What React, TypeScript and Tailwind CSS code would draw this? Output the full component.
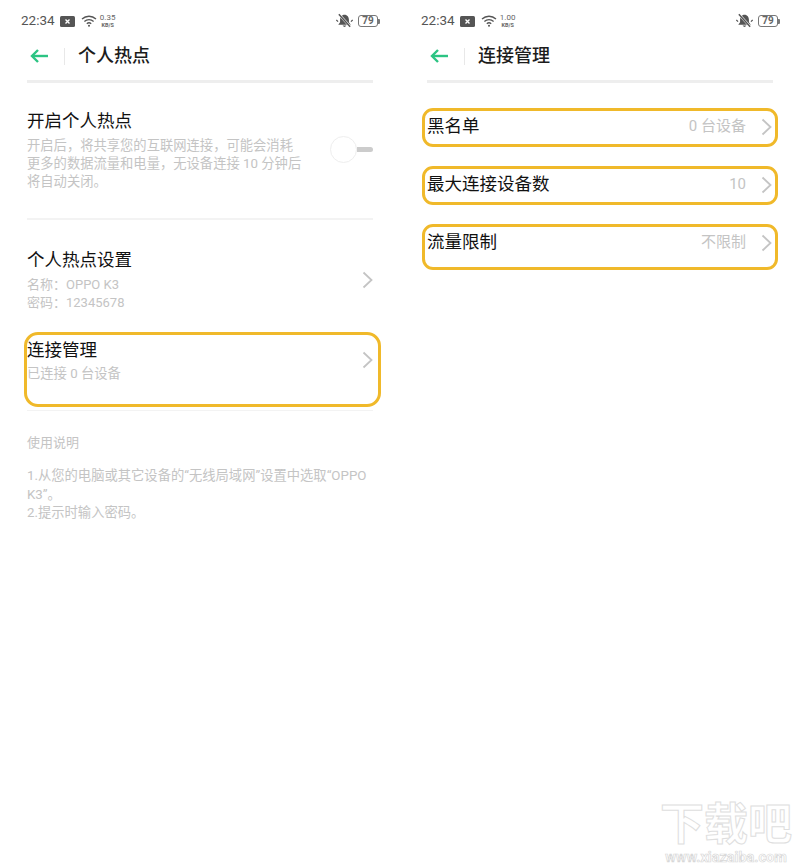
const font = "font-['Roboto','Noto_Sans_CJK_SC',sans-serif]"

function Chevron({ className = '' }: { className?: string }) {
  return (
    <svg width="11" height="18" viewBox="0 0 11 18" fill="none" className={className}>
      <path d="M1.5 1.5 L9.5 9 L1.5 16.5" stroke="#c4c4c4" strokeWidth="1.8" />
    </svg>
  )
}

function StatusBar({ speed }: { speed: string }) {
  return (
    <div className="flex h-[14px] items-center justify-between pl-[21px] pr-[22px]">
      <div className="flex items-center">
        <span className="text-[13.5px] leading-none text-[#555]">22:34</span>
        <svg width="15" height="11" viewBox="0 0 15 11" className="ml-[5px]">
          <rect width="15" height="11" rx="1.5" fill="#555" />
          <path d="M5.5 3.5 L9.5 7.5 M9.5 3.5 L5.5 7.5" stroke="#fff" strokeWidth="1.4" />
        </svg>
        <svg width="16" height="12" viewBox="0 0 16 12" fill="none" className="ml-[6px]" stroke="#555" strokeWidth="1.3">
          <path d="M1 4 C5 0.3 11 0.3 15 4" />
          <path d="M3.4 6.4 C6 4 10 4 12.6 6.4" />
          <path d="M5.8 8.7 C7 7.7 9 7.7 10.2 8.7" />
          <circle cx="8" cy="10.8" r="1" fill="#555" stroke="none" />
        </svg>
        <div className="ml-[3px] flex w-[16px] flex-col items-center text-[#666]">
          <span className="text-[8px] leading-[8px]">{speed}</span>
          <span className="text-[5.5px] font-bold leading-[6px]">KB/S</span>
        </div>
      </div>
      <div className="flex items-center">
        <svg width="17" height="16" viewBox="0 0 15 14" fill="none">
          <path d="M7.5 1.5 C5 1.5 3.6 3.6 3.6 6 L3.6 8 L2 10.4 L13 10.4 L11.4 8 L11.4 6 C11.4 3.6 10 1.5 7.5 1.5 Z" fill="#555" />
          <path d="M5.8 11 Q7.5 13.6 9.2 11" fill="#555" />
          <path d="M3 1.5 L13 12.5" stroke="#fff" strokeWidth="2.2" />
          <path d="M2.5 1 L12.5 12" stroke="#555" strokeWidth="1.3" />
          <path d="M0.3 6 L1.8 7.5 M14.7 6 L13.2 7.5" stroke="#555" strokeWidth="1.1" />
        </svg>
        <div className="relative ml-[5px] flex h-[12px] w-[20px] items-center justify-center rounded-[3px] border border-[#777] text-[10px] font-bold leading-none text-[#666]">
          79
          <span className="absolute -right-[3px] h-[5px] w-[2px] rounded-r-[1px] bg-[#777]" />
        </div>
      </div>
    </div>
  )
}

function Header({ title }: { title: string }) {
  return (
    <>
      <div className="mt-[9px] flex h-[38px] items-center pl-[30px]">
        <svg width="18" height="14" viewBox="0 0 18 14" fill="none" stroke="#2cc483" strokeWidth="2.4">
          <path d="M18 7 L2 7" />
          <path d="M8 1 L2 7 L8 13" />
        </svg>
        <span className="ml-[16px] h-[17px] w-px bg-[#e8e8e8]" />
        <span className="ml-[13px] text-[18px] font-medium leading-none text-[#1c1c1c]">{title}</span>
      </div>
      <div className="mx-[27px] mt-[5px] h-[3px] bg-[#eeeeee]" />
    </>
  )
}

function Left() {
  return (
    <div className="w-[400px] pt-[14px]">
      <StatusBar speed="0.35" />
      <Header title="个人热点" />
      <div className="mx-[27px]">
        <div className="mt-[25px] flex justify-between">
          <div>
            <div className="text-[17.5px] leading-[26px] text-[#111]">开启个人热点</div>
            <div className="mt-[3px] w-[276px] text-[13.3px] leading-[18px] text-[#c4c4c4]">
              开启后，将共享您的互联网连接，可能会消耗更多的数据流量和电量，无设备连接 10 分钟后将自动关闭。
            </div>
          </div>
          <div className="mt-[28px] flex h-[27px] items-center">
            <span className="h-[27px] w-[27px] rounded-full border border-[#eeeeee] bg-white" />
            <span className="h-[5px] w-[16px] rounded-r-full bg-[#cccccc]" />
          </div>
        </div>
        <div className="mt-[27px] h-[2px] bg-[#f3f3f3]" />
        <div className="mt-[27px] flex items-center justify-between">
          <div>
            <div className="text-[17.5px] leading-[26px] text-[#111]">个人热点设置</div>
            <div className="mt-[3px] text-[13px] leading-[18px] text-[#c4c4c4]">名称：OPPO K3</div>
            <div className="text-[13px] leading-[18px] text-[#c4c4c4]">密码：12345678</div>
          </div>
          <Chevron />
        </div>
      </div>
      <div className="ml-[24px] mt-[20px] flex h-[75px] w-[357px] justify-between rounded-[14px] border-[3px] border-[#f0b92a] pr-[5px]">
        <div className="pt-[2px]">
          <div className="text-[17.5px] leading-[26px] text-[#111]">连接管理</div>
          <div className="mt-[2px] text-[13.3px] leading-[18px] text-[#c4c4c4]">已连接 0 台设备</div>
        </div>
        <Chevron className="mt-[16px]" />
      </div>
      <div className="mx-[27px] mt-[3px] h-px bg-[#f3f3f3]" />
      <div className="mx-[27px] mt-[23px] text-[13px] leading-[18px] text-[#c4c4c4]">使用说明</div>
      <div className="mx-[27px] mt-[15px] text-[13.3px] leading-[18.5px] text-[#c4c4c4]">
        <div>1.从您的电脑或其它设备的“无线局域网”设置中选取“OPPO K3”。</div>
        <div>2.提示时输入密码。</div>
      </div>
    </div>
  )
}

function BoxRow({ label, value, tall }: { label: string; value: string; tall?: boolean }) {
  return (
    <div
      className={`flex justify-between rounded-[11px] border-[3px] border-[#f0b92a] pl-[2px] pr-[3px] ${tall ? 'h-[46px]' : 'h-[39px]'}`}
    >
      <span className="mt-[2px] text-[17.5px] leading-[26px] text-[#111]">{label}</span>
      <div className="flex h-[31px] items-center">
        <span className="text-[15px] text-[#c4c4c4]">{value}</span>
        <Chevron className="ml-[15px]" />
      </div>
    </div>
  )
}

function Right() {
  return (
    <div className="w-[400px] pt-[14px]">
      <StatusBar speed="1.00" />
      <Header title="连接管理" />
      <div className="mx-[22px] mt-[25px] flex flex-col gap-[19px]">
        <BoxRow label="黑名单" value="0 台设备" />
        <BoxRow label="最大连接设备数" value="10" />
        <BoxRow label="流量限制" value="不限制" tall />
      </div>
    </div>
  )
}

export default function App() {
  return (
    <div className={`relative flex h-[867px] w-[800px] overflow-hidden bg-white ${font}`}>
      <Left />
      <Right />
      {/* faint site watermark */}
      <div className="absolute bottom-[1px] right-[8px] flex w-[132px] flex-col items-center">
        <span className="text-[44px] font-bold leading-[50px] text-white [-webkit-text-stroke:1px_#dedede]">下载吧</span>
        <span className="text-[14.5px] font-bold leading-[16px] text-white [-webkit-text-stroke:0.7px_#d8d8d8]">www.xiazaiba.com</span>
      </div>
    </div>
  )
}
